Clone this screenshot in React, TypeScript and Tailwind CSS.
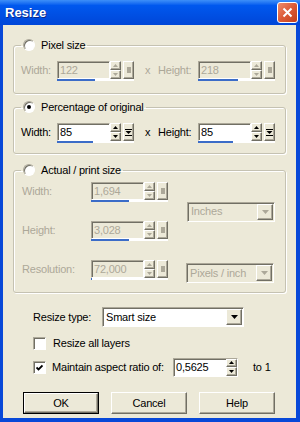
import React from 'react';

/**
 * Resize dialog (Windows XP / Paint Shop Pro style)
 */

const raised =
  'bg-[#ece9d8] border border-t-white border-l-white border-b-[#716f64] border-r-[#716f64] shadow-[inset_-1px_-1px_0_#aca899]';
const sunken =
  'border border-t-[#aca899] border-l-[#aca899] border-b-white border-r-white shadow-[inset_1px_1px_0_#716f64]';

function Up({ on }: { on: boolean }) {
  return (
    <svg width="5" height="3" viewBox="0 0 5 3">
      <path d="M2.5 0L5 3H0z" fill={on ? '#000' : '#aca899'} />
    </svg>
  );
}

function Down({ on, w = 5, h = 3 }: { on: boolean; w?: number; h?: number }) {
  return (
    <svg width={w} height={h} viewBox={`0 0 ${w} ${h}`}>
      <path d={`M0 0H${w}L${w / 2} ${h}z`} fill={on ? '#000' : '#aca899'} />
    </svg>
  );
}

function Spin({ on }: { on: boolean }) {
  return (
    <div className="flex flex-col w-[11px] h-full">
      <div className={`flex-1 flex items-center justify-center ${raised}`}>
        <Up on={on} />
      </div>
      <div className={`flex-1 flex items-center justify-center ${raised}`}>
        <Down on={on} />
      </div>
    </div>
  );
}

function Num({ value, on, fill }: { value: string; on: boolean; fill: string }) {
  return (
    <div className="flex flex-col w-[77px]">
      <div className="flex h-[18px]">
        <div
          className={`w-[53px] h-full flex items-center pl-[2px] ${sunken} ${
            on ? 'bg-white text-black' : 'bg-[#ece9d8] text-[#aca899]'
          }`}
        >
          {value}
        </div>
        <Spin on={on} />
        <div className="w-[2px]" />
        <div className={`w-[11px] h-full flex items-center justify-center ${raised}`}>
          {on ? (
            <svg width="7" height="9" viewBox="0 0 7 9">
              <path d="M0 1.5H7M0 7.5H7" stroke="#000" strokeWidth="1" />
              <path d="M0.5 3H6.5L3.5 6z" fill="#000" />
            </svg>
          ) : (
            <div className="w-[4px] h-[6px] bg-[#aca899]" />
          )}
        </div>
      </div>
      <div className="h-[2px] bg-white flex">
        <div className={`h-full bg-[#3b6cc8] ${fill}`} />
      </div>
    </div>
  );
}

function Combo({ text, on, w }: { text: string; on: boolean; w: string }) {
  return (
    <div
      className={`${w} h-[20px] flex items-center p-[1px] ${sunken} ${
        on ? 'bg-white text-black' : 'bg-[#ece9d8] text-[#aca899]'
      }`}
    >
      <span className="flex-1 pl-[2px]">{text}</span>
      <span className={`w-[16px] h-full flex items-center justify-center ${raised}`}>
        <Down on={on} w={7} h={4} />
      </span>
    </div>
  );
}

function Radio({ checked }: { checked?: boolean }) {
  return (
    <span className="w-[12px] h-[12px] rounded-full bg-white border border-t-[#aca899] border-l-[#aca899] border-b-white border-r-white shadow-[inset_1px_1px_0_#716f64] flex items-center justify-center">
      {checked && <span className="w-[4px] h-[4px] rounded-full bg-black" />}
    </span>
  );
}

function Check({ checked }: { checked?: boolean }) {
  return (
    <span className={`w-[13px] h-[13px] bg-white flex items-center justify-center ${sunken}`}>
      {checked && (
        <svg width="7" height="7" viewBox="0 0 7 7">
          <path d="M0.5 3.5L2.5 5.5L6.5 1.5" stroke="#000" strokeWidth="1.8" fill="none" />
        </svg>
      )}
    </span>
  );
}

function Group({
  title,
  checked,
  children,
  className,
}: {
  title: string;
  checked?: boolean;
  children: React.ReactNode;
  className: string;
}) {
  return (
    <fieldset
      className={`ml-[10px] w-[273px] border border-[#c5c2b2] rounded-[3px] shadow-[inset_1px_1px_0_#fff,1px_1px_0_#fff] ${className}`}
    >
      <legend className="ml-[7px] px-[2px]">
        <span className="flex items-center h-[14px] gap-[6px] text-black bg-[#ece9d8]">
          <Radio checked={checked} />
          {title}
        </span>
      </legend>
      {children}
    </fieldset>
  );
}

export default function App() {
  return (
    <div className="w-[300px] h-[422px] flex flex-col font-['Liberation_Sans',Arial,sans-serif] text-[11px] leading-none tracking-[-0.2px] select-none">
      {/* Title bar */}
      <div className="h-[25px] shrink-0 flex items-center justify-between pl-[5px] pr-[2px] bg-linear-to-b from-[#3d8ff8] via-[#0058ee] via-[22%] to-[#0046d8]">
        <span className="text-white font-bold text-[13px] tracking-normal [text-shadow:1px_1px_0_#0a2a8a]">
          Resize
        </span>
        <div className="w-[21px] h-[21px] rounded-[3px] border border-white bg-linear-to-br from-[#ee8b6b] via-[#dc5a36] to-[#c2401a] flex items-center justify-center">
          <svg width="11" height="11" viewBox="0 0 11 11">
            <path d="M1.5 1.5L9.5 9.5M9.5 1.5L1.5 9.5" stroke="#fff" strokeWidth="2" />
          </svg>
        </div>
      </div>

      <div className="flex-1 flex flex-col bg-[#ece9d8] border-l-[3px] border-r-[4px] border-b-[4px] border-[#0848d8]">
        {/* Pixel size */}
        <Group title="Pixel size" className="mt-[13px]">
          <div className="flex pl-[7px] pt-[9px] pb-[12px] text-[#aca899]">
            <span className="w-[36px] h-[18px] flex items-center">Width:</span>
            <Num value="122" on={false} fill="w-[38px]" />
            <span className="ml-[11px] w-[13px] h-[18px] flex items-center">x</span>
            <span className="w-[40px] h-[18px] flex items-center">Height:</span>
            <Num value="218" on={false} fill="w-[40px]" />
          </div>
        </Group>

        {/* Percentage of original */}
        <Group title="Percentage of original" checked className="mt-[6px]">
          <div className="flex pl-[7px] pt-[9px] pb-[10px] text-black">
            <span className="w-[36px] h-[18px] flex items-center">Width:</span>
            <Num value="85" on fill="w-[36px]" />
            <span className="ml-[11px] w-[13px] h-[18px] flex items-center">x</span>
            <span className="w-[40px] h-[18px] flex items-center">Height:</span>
            <Num value="85" on fill="w-[35px]" />
          </div>
        </Group>

        {/* Actual / print size */}
        <Group title="Actual / print size" className="mt-[9px]">
          <div className="grid grid-cols-[69px_77px_1fr] grid-rows-[20px_20px_20px] gap-y-[19px] pl-[8px] pt-[5px] pb-[12px] text-[#aca899]">
            <span className="h-[18px] flex items-center">Width:</span>
            <Num value="1,694" on={false} fill="w-[38px]" />
            <div className="row-span-2 self-center pl-[19px]">
              <Combo text="Inches" on={false} w="w-[88px]" />
            </div>
            <span className="h-[18px] flex items-center">Height:</span>
            <Num value="3,028" on={false} fill="w-[38px]" />
            <span className="h-[18px] flex items-center">Resolution:</span>
            <Num value="72,000" on={false} fill="w-[1px]" />
            <div className="pl-[18px] pt-[3px]">
              <Combo text="Pixels / inch" on={false} w="w-[88px]" />
            </div>
          </div>
        </Group>

        {/* Resize type */}
        <div className="mt-[14px] ml-[30px] flex items-center h-[20px]">
          <span className="w-[69px]">Resize type:</span>
          <Combo text="Smart size" on w="w-[142px]" />
        </div>

        <div className="mt-[10px] ml-[30px] flex items-center h-[13px]">
          <Check />
          <span className="ml-[7px]">Resize all layers</span>
        </div>

        <div className="mt-[7px] ml-[30px] flex items-center h-[20px]">
          <Check checked />
          <span className="ml-[6px] w-[121px]">Maintain aspect ratio of:</span>
          <div className={`w-[65px] h-[19px] flex bg-white ${sunken}`}>
            <span className="flex-1 flex items-center pl-[2px]">0,5625</span>
            <Spin on />
          </div>
          <span className="ml-[15px]">to 1</span>
        </div>

        {/* Buttons */}
        <div className="mt-[15px] ml-[20px] flex gap-[12px]">
          <div className="w-[76px] h-[22px] border border-black">
            <div className={`w-full h-full flex items-center justify-center ${raised}`}>OK</div>
          </div>
          <div className={`w-[76px] h-[22px] flex items-center justify-center ${raised}`}>Cancel</div>
          <div className={`w-[76px] h-[22px] flex items-center justify-center ${raised}`}>Help</div>
        </div>
      </div>
    </div>
  );
}
